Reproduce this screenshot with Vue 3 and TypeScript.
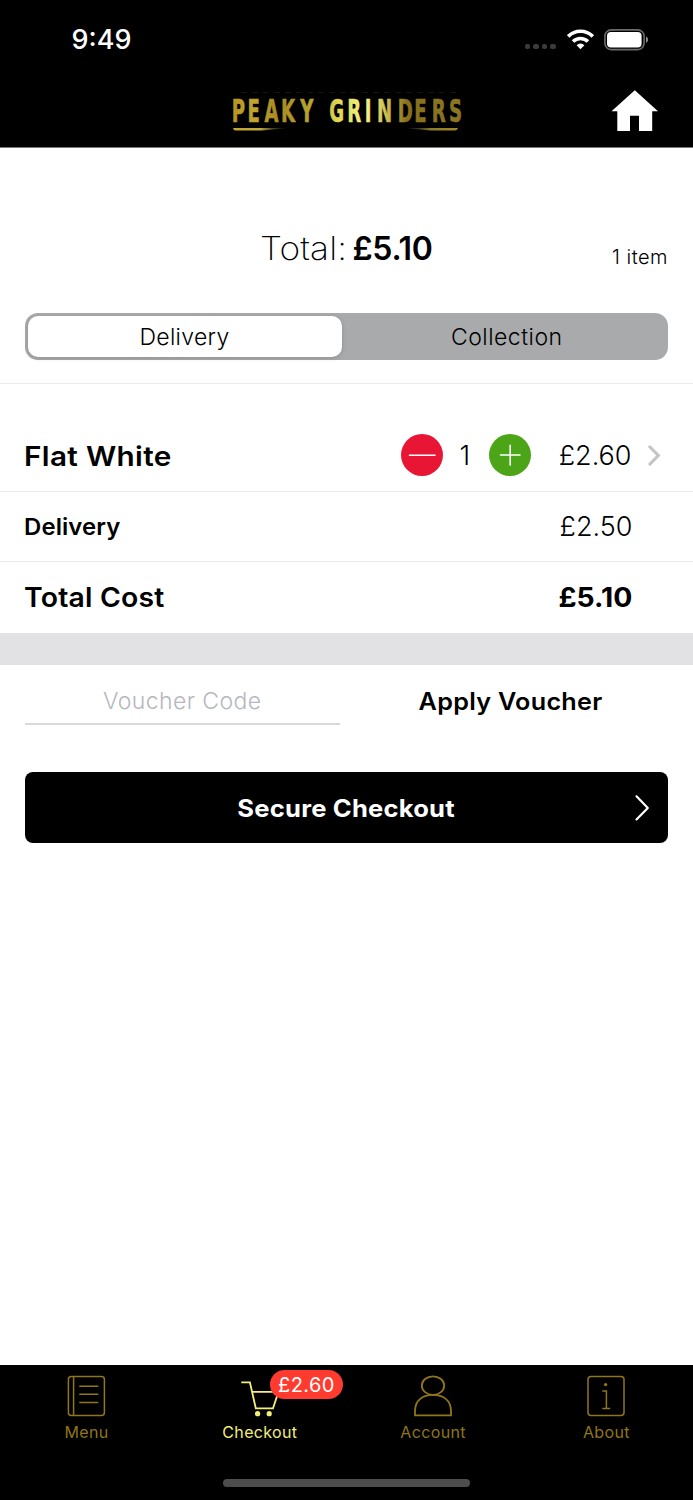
<script setup lang="ts">
import { ref } from 'vue'

type Mode = 'Delivery' | 'Collection'
const modes: Mode[] = ['Delivery', 'Collection']
const mode = ref<Mode>('Delivery')

const tabs = [
  { id: 'menu', label: 'Menu' },
  { id: 'checkout', label: 'Checkout' },
  { id: 'account', label: 'Account' },
  { id: 'about', label: 'About' },
]
const activeTab = ref('checkout')
</script>

<template>
  <div class="screen">
    <header class="header">
      <div class="status">
        <span class="time">9:49</span>
        <div class="signals">
          <span class="dots"><i v-for="n in 4" :key="n"></i></span>
          <svg class="wifi" width="27" height="21" viewBox="0 0 27 21">
            <g fill="none" stroke="#fff" stroke-width="3.5">
              <path d="M1.2 7.4A17.3 17.3 0 0 1 25.8 7.4" />
              <path d="M6 12.5A10.6 10.6 0 0 1 21 12.5" />
            </g>
            <path d="M13.5 20.2L9.6 16.2A5.6 5.6 0 0 1 17.4 16.2Z" fill="#fff" />
          </svg>
          <svg class="battery" width="45" height="22" viewBox="0 0 45 22">
            <rect x="0.9" y="0.9" width="39.2" height="19.7" rx="6.3" fill="none" stroke="#6b6b6b" stroke-width="1.6" />
            <rect x="3" y="3" width="34.6" height="15.4" rx="4" fill="#fff" />
            <path d="M42 7.6C44.8 8.6 44.8 12.9 42 13.9Z" fill="#8a8a8a" />
          </svg>
        </div>
      </div>
      <div class="titlebar">
        <svg class="logo" width="230" height="44" viewBox="0 0 230 44" role="img">
          <defs>
            <linearGradient id="gold" gradientUnits="userSpaceOnUse" x1="0" y1="0" x2="371" y2="0">
              <stop offset="0" stop-color="#b89420" />
              <stop offset="0.1" stop-color="#bfa52f" />
              <stop offset="0.2" stop-color="#a88a22" />
              <stop offset="0.36" stop-color="#bca735" />
              <stop offset="0.46" stop-color="#e0d650" />
              <stop offset="0.58" stop-color="#f4f38a" />
              <stop offset="0.68" stop-color="#c8b84c" />
              <stop offset="0.76" stop-color="#87701c" />
              <stop offset="1" stop-color="#8c761f" />
            </linearGradient>
            <linearGradient id="fadeRight"><stop offset="0" stop-color="#c2a52e" /><stop offset="0.5" stop-color="#bda93d" /><stop offset="1" stop-color="#4a4430" stop-opacity="0.1" /></linearGradient>
            <linearGradient id="fadeLeft"><stop offset="0" stop-color="#4a4430" stop-opacity="0.1" /><stop offset="0.5" stop-color="#8d7c2c" /><stop offset="1" stop-color="#a38722" /></linearGradient>
          </defs>
          <path d="M9 4.5H226" stroke="#14130e" stroke-width="1" stroke-dasharray="6 5" />
          <text class="wordmark" transform="scale(.62 1)" y="34.2" fill="url(#gold)" stroke="url(#gold)" stroke-width="0.6"
            x="-0.5 25 52.5 79 110 140 157 186 214 234 267.5 294 322 350">PEAKY GRINDERS</text>
          <path d="M1 40H56L30 42.6H3Q1.5 42.4 1 40Z" fill="url(#fadeRight)" />
          <path d="M226 40H172L198 42.6H223Q225.5 42.4 226 40Z" fill="url(#fadeLeft)" />
        </svg>
        <svg class="home" width="48" height="42" viewBox="0 0 48 42">
          <path d="M23.8 .3L47 21.3H41.2V41H28V25.7H19V41H6.3V21.3H.5Z" fill="#fff" />
        </svg>
      </div>
    </header>

    <section class="summary">
      <span class="total"><span class="lead">Total:</span><b>£5.10</b></span>
      <span class="items">1 item</span>
    </section>

    <div class="segmented">
      <button v-for="m in modes" :key="m" :class="['seg', m.toLowerCase(), { on: m === mode }]" @click="mode = m">{{ m }}</button>
    </div>

    <section class="lines">
      <div class="line product">
        <span class="name">Flat White</span>
        <button class="round minus">
          <svg width="42" height="42"><path d="M8.5 21.3H34" stroke="#fff" stroke-width="1.6" stroke-linecap="round" /></svg>
        </button>
        <span class="qty">1</span>
        <button class="round plus">
          <svg width="42" height="42"><path d="M11.5 21H31M21.2 11.2V31" stroke="#fff" stroke-width="1.6" stroke-linecap="round" /></svg>
        </button>
        <span class="price">£2.60</span>
        <svg class="more" width="13" height="21" viewBox="0 0 13 21">
          <path d="M2 2L10.3 10.5L2 19" fill="none" stroke="#c5c5c7" stroke-width="3.2" stroke-linecap="round" />
        </svg>
      </div>
      <div class="line fee"><span class="name">Delivery</span><span class="price">£2.50</span></div>
      <div class="line cost"><span class="name">Total Cost</span><span class="price">£5.10</span></div>
    </section>

    <section class="voucher">
      <div class="code">Voucher Code</div>
      <button class="apply"><span>Apply Voucher</span></button>
    </section>

    <button class="secure">
      <span>Secure Checkout</span>
      <svg width="16" height="28" viewBox="0 0 16 28">
        <path d="M2.5 2.3L13.8 14L2.5 25.4" fill="none" stroke="#fff" stroke-width="2.2" stroke-linecap="round" stroke-linejoin="round" />
      </svg>
    </button>

    <nav class="tabbar">
      <div class="tabs">
        <button v-for="t in tabs" :key="t.id" :class="['tab', { active: t.id === activeTab }]" @click="activeTab = t.id">
          <span class="icon">
            <svg width="40" height="42" viewBox="0 0 40 42" fill="none" stroke="currentColor" stroke-width="1.5">
              <template v-if="t.id === 'menu'">
                <rect x="1.4" y="1.5" width="36" height="39" rx="3" />
                <path d="M6.6 1.5V40.5M12.3 11.3H31.3M12.3 19.3H31.3M12.3 27.4H31.3" />
              </template>
              <template v-else-if="t.id === 'checkout'">
                <path d="M1.3 7.3H9.9L15.8 33.3H33L38.5 16.8H12.1" stroke-width="1.8" />
                <g fill="currentColor" stroke="none"><circle cx="17.6" cy="38.7" r="2.6" /><circle cx="29.2" cy="38.7" r="2.6" /></g>
              </template>
              <template v-else-if="t.id === 'account'">
                <ellipse cx="20" cy="10.6" rx="11.2" ry="9.3" stroke-width="1.8" />
                <path d="M2 40.4V36C2 25 10 19.9 20 19.9S38 25 38 36V40.4Z" stroke-width="1.8" />
              </template>
              <template v-else>
                <rect x="2" y="1.5" width="36" height="39" rx="3" />
                <circle cx="19.6" cy="9.6" r="1.7" fill="currentColor" stroke="none" />
                <path d="M16.3 15.9H20.4V33.4M16.3 33.4H24.2" />
              </template>
            </svg>
            <span v-if="t.id === 'checkout'" class="badge">£2.60</span>
          </span>
          <span class="label">{{ t.label }}</span>
        </button>
      </div>
      <div class="indicator"></div>
    </nav>
  </div>
</template>

<style>
body {
  margin: 0;
  background: #fff;
}
</style>

<style scoped>
.screen {
  display: flex;
  flex-direction: column;
  width: 693px;
  height: 1500px;
  box-sizing: border-box;
  background: #fff;
  color: #000;
  font-family: Inter, 'Open Sans', sans-serif;
  overflow: hidden;
}
button {
  border: 0;
  padding: 0;
  margin: 0;
  background: none;
  color: inherit;
  font-family: inherit;
}
svg {
  display: block;
}
.header {
  height: 147px;
  background: #000;
  border-bottom: 1px solid #777;
}
.status {
  display: flex;
  justify-content: space-between;
  align-items: center;
  height: 79px;
  padding: 0 44px 0 71.5px;
}
.time {
  color: #fff;
  font-size: 27px;
  font-weight: 550;
}
.signals {
  display: flex;
  align-items: center;
}
.dots {
  display: flex;
  gap: 3px;
  margin: 14px 11px 0 0;
}
.dots i {
  width: 5.6px;
  height: 5.6px;
  border-radius: 2px;
  background: #3b3b3b;
}
.wifi {
  margin-right: 10px;
}
.titlebar {
  display: grid;
  grid-template-columns: 1fr 230px 1fr;
  align-items: start;
  padding: 9px 34.5px 0;
}
.logo {
  grid-column: 2;
}
.wordmark {
  font-family: 'DejaVu Sans Condensed', 'DejaVu Sans', sans-serif;
  font-stretch: condensed;
  font-weight: 700;
  font-size: 32.5px;
}
.home {
  justify-self: end;
  margin-top: 2px;
}
.summary {
  display: grid;
  grid-template-columns: 1fr auto 1fr;
  align-items: center;
  height: 165px;
  padding: 0 25px;
  box-sizing: border-box;
}
.total {
  grid-column: 2;
  display: flex;
  gap: 8px;
  font-size: 32px;
  line-height: 40px;
  margin-top: 36px;
}
.lead {
  font-weight: 250;
  letter-spacing: 0.1px;
  transform: translateX(2px) scaleX(1.1);
  transform-origin: right;
  margin-left: 5px;
}
.total b {
  font-weight: 630;
  letter-spacing: -0.3px;
}
.items {
  justify-self: end;
  margin-top: 52px;
  font-size: 20px;
  font-weight: 280;
  line-height: 24px;
  letter-spacing: 0.5px;
}
.segmented {
  display: flex;
  height: 47px;
  margin: 0 25px 0 24.5px;
  padding: 3px;
  box-sizing: border-box;
  border-radius: 13px;
  background: #a9aaac;
}
.seg {
  flex: 0 0 314px;
  border-radius: 10px;
  font-size: 23px;
  font-weight: 270;
  letter-spacing: 0.3px;
}
.seg.collection {
  flex: 1;
  padding-left: 7px;
  letter-spacing: 0.5px;
}
.seg.on {
  background: #fff;
  box-shadow: 0 1px 5px rgba(0, 0, 0, 0.16);
}
.lines {
  margin-top: 23px;
  border-top: 1px solid #ebebeb;
}
.line {
  display: flex;
  align-items: center;
  justify-content: space-between;
  height: 70px;
  padding: 0 60.5px 0 24px;
  border-bottom: 1px solid #ebebeb;
  box-sizing: border-box;
}
.product {
  height: 108px;
  padding: 35px 32.5px 0 24px;
}
.name {
  font-size: 27px;
  font-weight: 570;
  letter-spacing: 0.2px;
  transform: scaleX(1.05);
  transform-origin: left;
}
.product .name {
  margin: 2px auto 0 0;
  letter-spacing: 0.3px;
  transform: scaleX(1.1);
}
.fee .name {
  font-size: 23px;
  letter-spacing: 0.1px;
  transform: scaleX(1.04);
}
.price {
  font-size: 27px;
  font-weight: 270;
  letter-spacing: 0;
}
.product .price {
  width: 101px;
  margin-top: 1px;
  text-align: right;
}
.cost {
  height: 71px;
  border-bottom: 0;
}
.cost .price {
  font-weight: 650;
  transform: scaleX(1.05);
  transform-origin: right;
}
.round {
  width: 42px;
  height: 42px;
  border-radius: 50%;
}
.minus {
  background: #e81535;
}
.plus {
  background: #4ba517;
}
.qty {
  width: 45.5px;
  box-sizing: border-box;
  padding-right: 2px;
  margin-top: 1px;
  text-align: center;
  font-size: 27px;
  font-weight: 270;
}
.more {
  margin-left: 16px;
}
.cost .name {
  margin-left: -0.5px;
}
.voucher {
  display: flex;
  height: 60px;
  padding-left: 24.5px;
  border-top: 32px solid #e2e2e4;
}
.code {
  width: 315.5px;
  height: 60px;
  box-sizing: border-box;
  padding-top: 12px;
  border-bottom: 2px solid #d9d9d9;
  text-align: center;
  color: #b5b7c0;
  font-size: 23px;
  font-weight: 270;
  line-height: 49px;
  letter-spacing: 0.4px;
}
.apply {
  width: 341px;
  padding-top: 12px;
  text-align: center;
  font-size: 24px;
  font-weight: 570;
  letter-spacing: 0.25px;
}
.apply span {
  display: inline-block;
  transform: scaleX(1.05);
}
.secure {
  display: grid;
  grid-template-columns: 1fr auto 1fr;
  align-items: center;
  flex: none;
  height: 71px;
  margin: 47px 25px 0 24.5px;
  padding: 0 18px;
  border-radius: 8px;
  background: #000;
  color: #fff;
  font-size: 24px;
  font-weight: 670;
  letter-spacing: 0.2px;
}
.secure span {
  grid-column: 2;
  padding-top: 1px;
  transform: scaleX(1.065);
}
.secure svg {
  justify-self: end;
}
.tabbar {
  height: 135px;
  margin-top: auto;
  background: #000;
}
.tabs {
  display: grid;
  grid-template-columns: repeat(4, 1fr);
  height: 114px;
}
.tab {
  display: flex;
  flex-direction: column;
  align-items: center;
  padding-top: 10px;
  color: #8f7618;
}
.tab.active {
  color: #f3ef7c;
}
.icon {
  position: relative;
}
.label {
  margin-top: 5px;
  font-size: 16px;
  font-weight: 430;
  line-height: 21px;
  letter-spacing: 0.35px;
}
.badge {
  position: absolute;
  left: 30px;
  top: -5px;
  width: 73px;
  height: 29px;
  border-radius: 15px;
  background: #ff3b30;
  color: #fff;
  font-size: 20px;
  line-height: 30px;
  letter-spacing: 0.4px;
  text-align: center;
}
.indicator {
  width: 247px;
  height: 8px;
  margin: 0 auto;
  border-radius: 4px;
  background: #4d4d4d;
}
</style>
